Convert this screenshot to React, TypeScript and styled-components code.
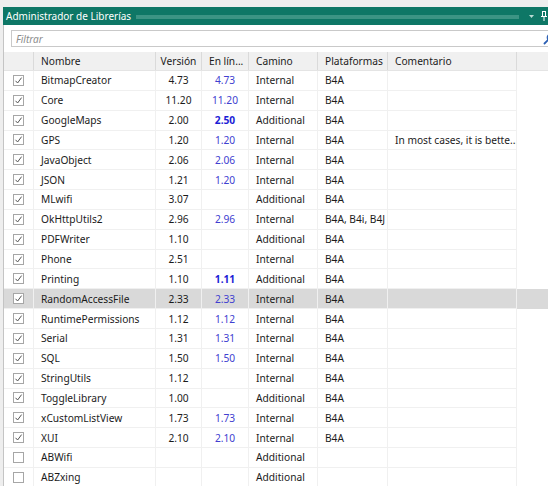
import React from 'react'
import styled, { createGlobalStyle, css } from 'styled-components'

type Lib = {
  name: string
  version: string
  online?: string
  bold?: boolean
  path: string
  platforms?: string
  comment?: string
  checked: boolean
  selected?: boolean
}

const libs: Lib[] = [
  { name: 'BitmapCreator', version: '4.73', online: '4.73', path: 'Internal', platforms: 'B4A', checked: true },
  { name: 'Core', version: '11.20', online: '11.20', path: 'Internal', platforms: 'B4A', checked: true },
  { name: 'GoogleMaps', version: '2.00', online: '2.50', bold: true, path: 'Additional', platforms: 'B4A', checked: true },
  { name: 'GPS', version: '1.20', online: '1.20', path: 'Internal', platforms: 'B4A', comment: 'In most cases, it is bette...', checked: true },
  { name: 'JavaObject', version: '2.06', online: '2.06', path: 'Internal', platforms: 'B4A', checked: true },
  { name: 'JSON', version: '1.21', online: '1.20', path: 'Internal', platforms: 'B4A', checked: true },
  { name: 'MLwifi', version: '3.07', path: 'Additional', platforms: 'B4A', checked: true },
  { name: 'OkHttpUtils2', version: '2.96', online: '2.96', path: 'Internal', platforms: 'B4A, B4i, B4J', checked: true },
  { name: 'PDFWriter', version: '1.10', path: 'Additional', platforms: 'B4A', checked: true },
  { name: 'Phone', version: '2.51', path: 'Internal', platforms: 'B4A', checked: true },
  { name: 'Printing', version: '1.10', online: '1.11', bold: true, path: 'Additional', platforms: 'B4A', checked: true },
  { name: 'RandomAccessFile', version: '2.33', online: '2.33', path: 'Internal', platforms: 'B4A', checked: true, selected: true },
  { name: 'RuntimePermissions', version: '1.12', online: '1.12', path: 'Internal', platforms: 'B4A', checked: true },
  { name: 'Serial', version: '1.31', online: '1.31', path: 'Internal', platforms: 'B4A', checked: true },
  { name: 'SQL', version: '1.50', online: '1.50', path: 'Internal', platforms: 'B4A', checked: true },
  { name: 'StringUtils', version: '1.12', path: 'Internal', platforms: 'B4A', checked: true },
  { name: 'ToggleLibrary', version: '1.00', path: 'Additional', platforms: 'B4A', checked: true },
  { name: 'xCustomListView', version: '1.73', online: '1.73', path: 'Internal', platforms: 'B4A', checked: true },
  { name: 'XUI', version: '2.10', online: '2.10', path: 'Internal', platforms: 'B4A', checked: true },
  { name: 'ABWifi', version: '', path: 'Additional', checked: false },
  { name: 'ABZxing', version: '', path: 'Additional', checked: false },
]

const App = () => {
  return (
    <>
      <GlobalStyle />
      <Screen>
        <Panel>
          <TitleBar>
            <Title>Administrador de Librerías</Title>
            <Grip />
            <svg width="7" height="6" viewBox="0 0 7 6">
              <path d="M1 2 L6 2 L3.5 5 Z" fill="#b9dbd4" />
            </svg>
            <svg width="8" height="12" viewBox="0 0 8 12">
              <path d="M2 1 H6 V6 H7 V7 H4.5 V11 H3.5 V7 H1 V6 H2 Z M3 2 V6 H5 V2 Z" fill="#ffffff" />
            </svg>
          </TitleBar>
          <FilterRow>
            <FilterBox>
              <FilterInput placeholder="Filtrar" />
              <SearchIcon width="12" height="12" viewBox="0 0 12 12">
                <circle cx="7.5" cy="4.5" r="3.2" fill="none" stroke="#2b5fb4" strokeWidth="1.3" />
                <path d="M5.2 6.8 L1.5 10.5" stroke="#2b5fb4" strokeWidth="1.8" strokeLinecap="round" />
              </SearchIcon>
            </FilterBox>
          </FilterRow>
          <Table>
            <HeaderRow>
              <HeadCell />
              <HeadCell>Nombre</HeadCell>
              <HeadCell $align="center">Versión</HeadCell>
              <HeadCell>En lín...</HeadCell>
              <HeadCell>Camino</HeadCell>
              <HeadCell>Plataformas</HeadCell>
              <HeadCell>Comentario</HeadCell>
              <HeadCell $last />
            </HeaderRow>
            {libs.map((lib) => (
              <Row key={lib.name} $selected={lib.selected}>
                <Cell $align="center">
                  <CheckBox>
                    {lib.checked && (
                      <svg width="9" height="9" viewBox="0 0 9 9">
                        <path d="M1.5 4.8 L3.6 7 L7.6 1.6" fill="none" stroke="#555" strokeWidth="1" />
                      </svg>
                    )}
                  </CheckBox>
                </Cell>
                <Cell>{lib.name}</Cell>
                <Cell $align="center">{lib.version}</Cell>
                <Cell $align="center">
                  <Online $bold={lib.bold}>{lib.online}</Online>
                </Cell>
                <Cell>{lib.path}</Cell>
                <Cell>{lib.platforms}</Cell>
                <Cell>{lib.comment}</Cell>
                <Cell $last />
              </Row>
            ))}
          </Table>
        </Panel>
      </Screen>
    </>
  )
}

export default App

const GlobalStyle = createGlobalStyle`
  body {
    margin: 0;
    background: #f0f0f0;
    font-family: "Noto Sans", "Open Sans", sans-serif;
  }
`

const Screen = styled.div`
  width: 548px;
  height: 486px;
  padding: 7px 0 0 3px;
  box-sizing: border-box;
  overflow: hidden;
  background: #eeeeee;
`

const Panel = styled.div`
  background: #ffffff;
  border-left: 1px solid #c4c4c4;
  display: flex;
  flex-direction: column;
  min-height: 100%;
`

const TitleBar = styled.div`
  flex: none;
  height: 18px;
  background: #0e7766;
  display: flex;
  align-items: center;
  gap: 5px;
  padding: 0 0 0 3px;
  margin-left: -1px;
`

const Title = styled.span`
  color: #ffffff;
  font-size: 10px;
  white-space: nowrap;
`

const Grip = styled.div`
  flex: 1;
  height: 4px;
  margin: 1px 4px 0 0;
  background: radial-gradient(circle, #55a596 0.6px, transparent 0.9px) 0 0 / 2px 2px;
`

const FilterRow = styled.div`
  flex: none;
  padding: 5px 0 5px 7px;
`

const FilterBox = styled.div`
  height: 15px;
  border: 1px solid #c9c9c9;
  border-right: none;
  display: flex;
  align-items: center;
  padding-left: 4px;
`

const FilterInput = styled.input`
  flex: 1;
  border: none;
  outline: none;
  padding: 0;
  font-family: inherit;
  font-size: 10px;
  font-style: italic;
  &::placeholder {
    color: #8c8c8c;
  }
`

const SearchIcon = styled.svg`
  margin-right: -7px;
  flex: none;
`

const columns = '30px 122px 46px 47px 69px 70px 129px 1fr'

const Table = styled.div`
  flex: none;
  display: flex;
  flex-direction: column;
  font-size: 10.2px;
  color: #1b1b1b;
`

const HeaderRow = styled.div`
  display: grid;
  grid-template-columns: ${columns};
  height: 18px;
  background: #f0f0f0;
  border-bottom: 1px solid #e4e4e4;
`

const HeadCell = styled.div<{ $align?: string; $last?: boolean }>`
  display: flex;
  align-items: center;
  justify-content: ${(p) => (p.$align === 'center' ? 'center' : 'flex-start')};
  padding: 0 7px;
  border-right: ${(p) => (p.$last ? 'none' : '1px solid #dadada')};
  white-space: nowrap;
  overflow: hidden;
`

const Row = styled.div<{ $selected?: boolean }>`
  display: grid;
  grid-template-columns: ${columns};
  height: 19.85px;
  background: ${(p) => (p.$selected ? '#d9d9d9' : '#ffffff')};
`

const Cell = styled.div<{ $align?: string; $last?: boolean }>`
  display: flex;
  align-items: center;
  justify-content: ${(p) => (p.$align === 'center' ? 'center' : 'flex-start')};
  padding: 0 7px;
  white-space: nowrap;
  overflow: hidden;
  ${(p) =>
    !p.$last &&
    css`
      border-right: 1px solid #f0f0f0;
      border-bottom: 1px solid #f0f0f0;
    `}
`

const CheckBox = styled.div`
  width: 11px;
  height: 11px;
  border: 1px solid #a6a6a6;
  background: #ffffff;
  display: flex;
  align-items: center;
  justify-content: center;
  box-sizing: border-box;
`

const Online = styled.span<{ $bold?: boolean }>`
  color: ${(p) => (p.$bold ? '#1c1cd6' : '#4040d0')};
  font-weight: ${(p) => (p.$bold ? 700 : 400)};
`
